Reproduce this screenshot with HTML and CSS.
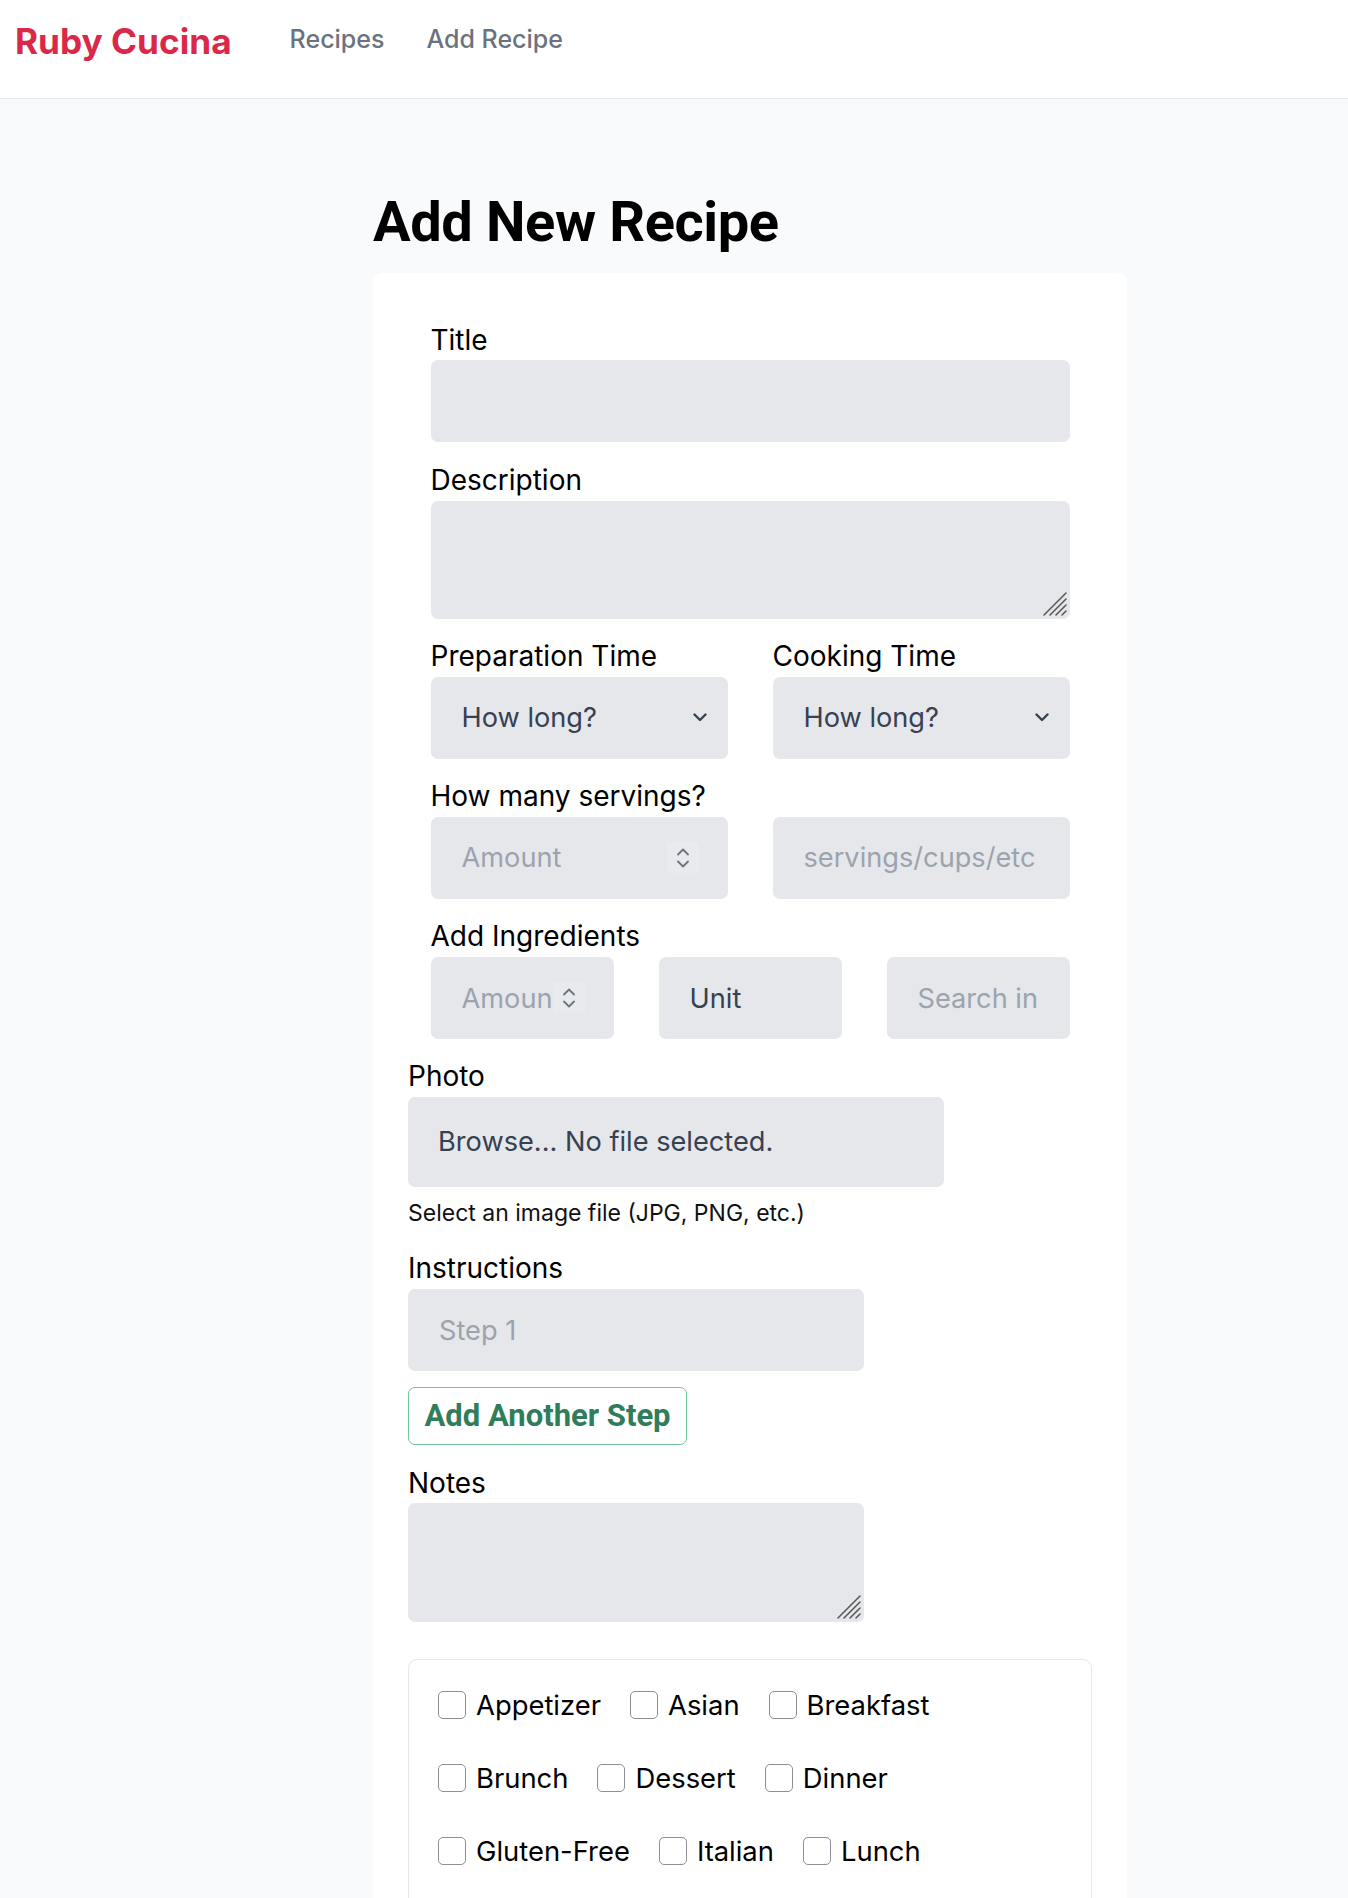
FILE: index.html
```html
<!DOCTYPE html>
<html lang="en">
<head>
<meta charset="utf-8">
<title>Add Recipe – Ruby Cucina</title>
<link rel="stylesheet" href="styles.css">
</head>
<body>
<header class="site-header">
  <a class="logo" href="#">Ruby Cucina</a>
  <nav class="nav">
    <a class="nav-link" href="#">Recipes</a>
    <a class="nav-link" href="#">Add Recipe</a>
  </nav>
</header>
<main class="page">
  <h1 class="page-title">Add New Recipe</h1>
  <form class="card">
    <div class="group">
      <div class="field">
        <label class="label" for="title">Title</label>
        <input id="title" class="control" type="text">
      </div>
      <div class="field">
        <label class="label" for="desc">Description</label>
        <div class="ta-wrap">
          <textarea id="desc" class="control textarea"></textarea>
          <svg class="grip" width="24" height="24" viewBox="0 0 24 24"><path d="M23 1 L1 23 M23 7 L7 23 M23 13 L13 23 M23 19 L19 23" stroke="#5a5a5a" stroke-width="1.6" fill="none" stroke-linecap="round"/></svg>
        </div>
      </div>
      <div class="grid-2 row">
        <div class="cell">
          <label class="label" for="prep">Preparation Time</label>
          <div class="select-wrap">
            <select id="prep" class="control select"><option>How long?</option></select>
            <svg class="chev" width="14" height="9" viewBox="0 0 14 9"><path d="M1.5 1.5 L7 7 L12.5 1.5" stroke="#374151" stroke-width="2.4" fill="none" stroke-linecap="round" stroke-linejoin="round"/></svg>
          </div>
        </div>
        <div class="cell">
          <label class="label" for="cook">Cooking Time</label>
          <div class="select-wrap">
            <select id="cook" class="control select"><option>How long?</option></select>
            <svg class="chev" width="14" height="9" viewBox="0 0 14 9"><path d="M1.5 1.5 L7 7 L12.5 1.5" stroke="#374151" stroke-width="2.4" fill="none" stroke-linecap="round" stroke-linejoin="round"/></svg>
          </div>
        </div>
      </div>
      <div class="field">
        <label class="label" for="servings">How many servings?</label>
        <div class="grid-2">
          <div class="num-wrap">
            <input id="servings" class="control num" type="text" placeholder="Amount">
            <span class="spin"><svg width="14" height="24" viewBox="0 0 14 24"><path d="M2 8.5 L7 3.5 L12 8.5 M2 15.5 L7 20.5 L12 15.5" stroke="#6b7280" stroke-width="1.8" fill="none" stroke-linecap="round" stroke-linejoin="round"/></svg></span>
          </div>
          <input class="control" type="text" placeholder="servings/cups/etc">
        </div>
      </div>
      <div class="field">
        <label class="label" for="ing-amount">Add Ingredients</label>
        <div class="grid-3">
          <div class="num-wrap">
            <input id="ing-amount" class="control num" type="text" placeholder="Amount">
            <span class="spin"><svg width="14" height="24" viewBox="0 0 14 24"><path d="M2 8.5 L7 3.5 L12 8.5 M2 15.5 L7 20.5 L12 15.5" stroke="#6b7280" stroke-width="1.8" fill="none" stroke-linecap="round" stroke-linejoin="round"/></svg></span>
          </div>
          <select class="control select"><option>Unit</option></select>
          <input class="control search" type="text" placeholder="Search ingredients">
        </div>
      </div>
    </div>

    <div class="field">
      <label class="label">Photo</label>
      <div class="file">Browse... No file selected.</div>
      <p class="help">Select an image file (JPG, PNG, etc.)</p>
    </div>

    <div class="field">
      <label class="label" for="step1">Instructions</label>
      <input id="step1" class="control narrow" type="text" placeholder="Step 1">
      <button class="btn-outline" type="button">Add Another Step</button>
    </div>

    <div class="field">
      <label class="label" for="notes">Notes</label>
      <div class="ta-wrap narrow">
        <textarea id="notes" class="control textarea tall"></textarea>
        <svg class="grip" width="24" height="24" viewBox="0 0 24 24"><path d="M23 1 L1 23 M23 7 L7 23 M23 13 L13 23 M23 19 L19 23" stroke="#5a5a5a" stroke-width="1.6" fill="none" stroke-linecap="round"/></svg>
      </div>
    </div>

    <fieldset class="cats">
      <label class="cat"><input type="checkbox" class="check">Appetizer</label>
      <label class="cat"><input type="checkbox" class="check">Asian</label>
      <label class="cat"><input type="checkbox" class="check">Breakfast</label>
      <label class="cat"><input type="checkbox" class="check">Brunch</label>
      <label class="cat"><input type="checkbox" class="check">Dessert</label>
      <label class="cat"><input type="checkbox" class="check">Dinner</label>
      <label class="cat"><input type="checkbox" class="check">Gluten-Free</label>
      <label class="cat"><input type="checkbox" class="check">Italian</label>
      <label class="cat"><input type="checkbox" class="check">Lunch</label>
    </fieldset>
  </form>
</main>
</body>
</html>
```

FILE: styles.css
```css
* { box-sizing: border-box; }

html, body { margin: 0; }

body {
  font-family: Inter, "Noto Sans", "Liberation Sans", sans-serif;
  font-size: 27.2px;
  line-height: 1.5;
  color: #000;
  background: #f9fafb;
}

/* Header */
.site-header {
  height: 99px;
  background: #fff;
  border-bottom: 1px solid #e5e7eb;
  display: flex;
  align-items: flex-start;
  padding: 20px 0 0 15px;
}

.logo {
  font-size: 35.2px;
  line-height: 42px;
  font-weight: 700;
  color: #da2948;
  text-decoration: none;
}

.nav {
  display: flex;
  gap: 42px;
  margin: 1px 0 0 58px;
}

.nav-link {
  font-size: 25px;
  line-height: 36px;
  font-weight: 500;
  color: #6b7280;
  text-decoration: none;
}

/* Page */
.page {
  padding: 90px 0 80px 373px;
}

.page-title {
  width: 754px;
  margin: 0 0 18px;
  font-family: Roboto, "Liberation Sans", sans-serif;
  font-size: 56px;
  line-height: 66px;
  font-weight: 700;
  letter-spacing: -0.4px;
}

.card {
  width: 754px;
  background: #fff;
  border-radius: 9px;
  padding: 35px;
}

.group {
  padding: 11.7px 22.5px 0;
}

.field { margin-bottom: 17.7px; }

.row { margin-bottom: 17.7px; }

.label {
  display: block;
  font-size: 28px;
  line-height: 40.8px;
}

.grid-2 {
  display: grid;
  grid-template-columns: 1fr 1fr;
  column-gap: 45px;
}

.grid-3 {
  display: grid;
  grid-template-columns: 1fr 1fr 1fr;
  column-gap: 45px;
}

.control {
  display: block;
  width: 100%;
  height: 81.6px;
  margin: 0;
  border: 0;
  border-radius: 7px;
  background: #e5e7eb;
  font-family: inherit;
  font-size: 27.2px;
  color: #374151;
  padding: 0 30px 0 31px;
  outline: none;
}

.control::placeholder {
  color: #9ca3af;
  opacity: 1;
}

.search { padding-right: 32px; }

.select {
  appearance: none;
  -webkit-appearance: none;
}

.select-wrap,
.num-wrap,
.ta-wrap {
  position: relative;
}

.chev {
  position: absolute;
  right: 21px;
  top: 36px;
  pointer-events: none;
}

.num { padding-right: 63px; }

.spin {
  position: absolute;
  right: 29px;
  top: 25px;
  width: 32px;
  height: 31px;
  background: #e9eaed;
  display: flex;
  align-items: center;
  justify-content: center;
  pointer-events: none;
}

.textarea {
  height: 118px;
  resize: none;
  padding: 12px 31px;
  line-height: 40.8px;
}

.tall { height: 119px; }

.grip {
  position: absolute;
  right: 3px;
  bottom: 3px;
  pointer-events: none;
}

.narrow { width: 456px; }

.file {
  width: 536px;
  height: 90px;
  border-radius: 7px;
  background: #e5e7eb;
  color: #374151;
  display: flex;
  align-items: center;
  padding: 0 30px;
}

.help {
  margin: 9px 0 0;
  font-size: 23px;
  line-height: 34.5px;
  color: #111;
}

.btn-outline {
  display: inline-flex;
  align-items: center;
  height: 58px;
  margin-top: 16px;
  padding: 0 15.5px;
  border: 1.5px solid #6cc79b;
  border-radius: 7px;
  background: #fff;
  color: #2f7d5b;
  font-family: Roboto, "Liberation Sans", sans-serif;
  font-size: 31px;
  font-weight: 700;
  line-height: 40px;
}

.cats {
  margin: 36.7px 0 0;
  padding: 25px 29px 40px;
  border: 1px solid #e5e7eb;
  border-radius: 9px;
  display: flex;
  flex-wrap: wrap;
  column-gap: 29px;
  row-gap: 32.2px;
  min-width: 0;
}

.cat {
  display: flex;
  align-items: center;
  gap: 10px;
  font-size: 27.4px;
  line-height: 40.8px;
  white-space: nowrap;
}

.check {
  appearance: none;
  -webkit-appearance: none;
  width: 28px;
  height: 28px;
  margin: 0;
  border: 1px solid #8e8f96;
  border-radius: 5px;
  background: #fff;
}
```
